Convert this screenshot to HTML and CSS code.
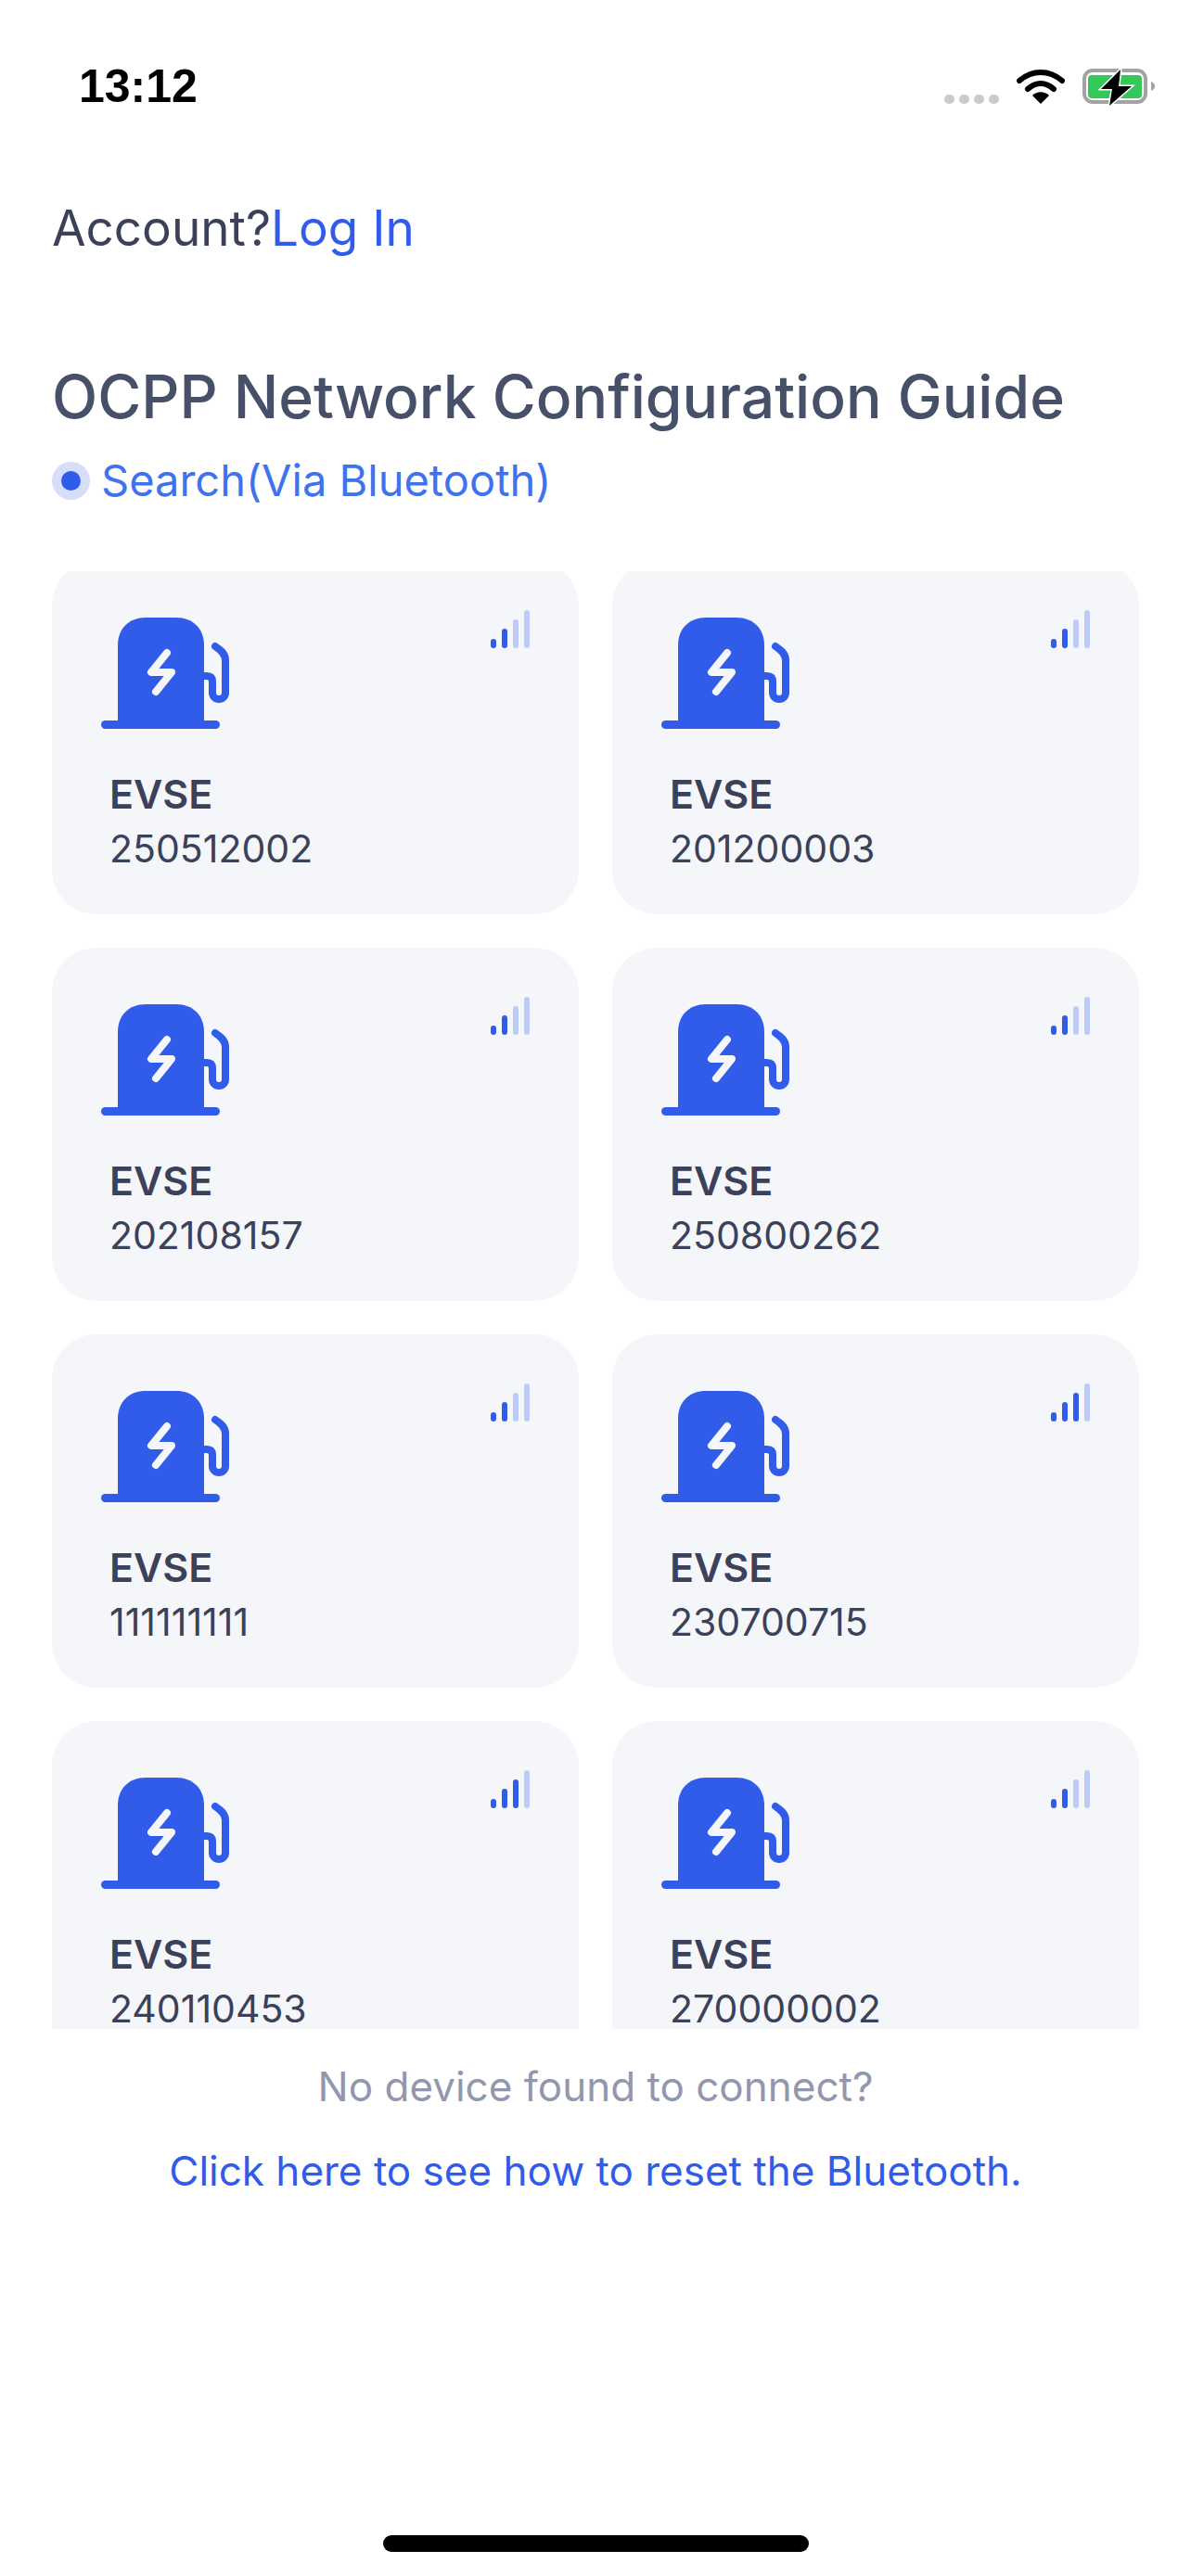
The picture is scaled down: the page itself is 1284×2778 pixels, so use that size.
FILE: index.html
```html
<!DOCTYPE html>
<html>
<head>
    <title>OCPP Network Configuration Guide</title>
    <link rel="stylesheet" href="styles.css">
</head>
<body>
    <svg class="sprites" width="0" height="0">
        <symbol id="charger" viewBox="0 0 140 120">
            <path d="M18 120 V30 C18 12 30 0 48 0 H81 C99 0 111 12 111 30 V120 Z" fill="#315cea"/>
            <rect x="0" y="111" width="128" height="9" rx="4.5" fill="#315cea"/>
            <path d="M71 38 L54 59 H76 L59 80" fill="none" stroke="#f4f6fa" stroke-width="8" stroke-linecap="round" stroke-linejoin="round"/>
            <path d="M111 63 H114 C118 63 120 65 120 69 V81 C120 85 123 88 127 88 C131 88 134 85 134 81 V46 C134 39 129 35 123 31" fill="none" stroke="#315cea" stroke-width="8" stroke-linecap="round"/>
        </symbol>
    </svg>

    <div class="status-bar">
        <span class="time">13:12</span>
        <div class="status-icons">
            <div class="cell-dots"><i></i><i></i><i></i><i></i></div>
            <svg class="wifi" width="52" height="37" viewBox="0 0 52 37">
                <path d="M3 12 C17 0 35 0 49 12" fill="none" stroke="#000" stroke-width="6" stroke-linecap="round"/>
                <path d="M12 21 C21 13 31 13 40 21" fill="none" stroke="#000" stroke-width="6" stroke-linecap="round"/>
                <path d="M17 28 C22 23 30 23 35 28 L26 37 Z" fill="#000"/>
            </svg>
            <svg class="battery" width="78" height="41" viewBox="0 0 78 41">
                <rect x="2" y="2" width="66" height="34" rx="9" fill="none" stroke="#a3a3a3" stroke-width="4"/>
                <rect x="6" y="7" width="58" height="25" rx="4" fill="#34c759"/>
                <path d="M74 14 C77 15 78 17 78 19 C78 21 77 23 74 24 Z" fill="#a3a3a3"/>
                <path d="M41 1 L20 22 H32 L29 40 L53 19 H39 Z" fill="#000" stroke="#fff" stroke-width="3" paint-order="stroke"/>
            </svg>
        </div>
    </div>

    <div class="page">
        <p class="account">Account?<a class="link">Log In</a></p>
        <h1>OCPP Network Configuration Guide</h1>
        <div class="search-state">
            <span class="radio"><i></i></span>
            <span>Search(Via Bluetooth)</span>
        </div>

        <div class="device-scroll">
            <div class="device-grid">
                <div class="device-card">
                    <div class="card-top">
                        <svg class="charger"><use href="#charger"/></svg>
                        <div class="signal lvl-2"><i></i><i></i><i></i><i></i></div>
                    </div>
                    <div class="device-name">EVSE</div>
                    <div class="device-id">250512002</div>
                </div>
                <div class="device-card">
                    <div class="card-top">
                        <svg class="charger"><use href="#charger"/></svg>
                        <div class="signal lvl-2"><i></i><i></i><i></i><i></i></div>
                    </div>
                    <div class="device-name">EVSE</div>
                    <div class="device-id">201200003</div>
                </div>
                <div class="device-card">
                    <div class="card-top">
                        <svg class="charger"><use href="#charger"/></svg>
                        <div class="signal lvl-2"><i></i><i></i><i></i><i></i></div>
                    </div>
                    <div class="device-name">EVSE</div>
                    <div class="device-id">202108157</div>
                </div>
                <div class="device-card">
                    <div class="card-top">
                        <svg class="charger"><use href="#charger"/></svg>
                        <div class="signal lvl-2"><i></i><i></i><i></i><i></i></div>
                    </div>
                    <div class="device-name">EVSE</div>
                    <div class="device-id">250800262</div>
                </div>
                <div class="device-card">
                    <div class="card-top">
                        <svg class="charger"><use href="#charger"/></svg>
                        <div class="signal lvl-2"><i></i><i></i><i></i><i></i></div>
                    </div>
                    <div class="device-name">EVSE</div>
                    <div class="device-id">111111111</div>
                </div>
                <div class="device-card">
                    <div class="card-top">
                        <svg class="charger"><use href="#charger"/></svg>
                        <div class="signal lvl-3"><i></i><i></i><i></i><i></i></div>
                    </div>
                    <div class="device-name">EVSE</div>
                    <div class="device-id">230700715</div>
                </div>
                <div class="device-card">
                    <div class="card-top">
                        <svg class="charger"><use href="#charger"/></svg>
                        <div class="signal lvl-3"><i></i><i></i><i></i><i></i></div>
                    </div>
                    <div class="device-name">EVSE</div>
                    <div class="device-id">240110453</div>
                </div>
                <div class="device-card">
                    <div class="card-top">
                        <svg class="charger"><use href="#charger"/></svg>
                        <div class="signal lvl-2"><i></i><i></i><i></i><i></i></div>
                    </div>
                    <div class="device-name">EVSE</div>
                    <div class="device-id">270000002</div>
                </div>
            </div>
        </div>

        <div class="help">
            <p class="help-note">No device found to connect?</p>
            <a class="help-link">Click here to see how to reset the Bluetooth.</a>
        </div>
    </div>

    <div class="home-bar"></div>
</body>
</html>
```

FILE: styles.css
```css
* {
    margin: 0;
    padding: 0;
    box-sizing: border-box;
}

html, body {
    width: 1284px;
    height: 2778px;
    overflow: hidden;
}

body {
    font-family: Inter, "Noto Sans", sans-serif;
    background: #fff;
    color: #3a4159;
    display: flex;
    flex-direction: column;
}

.sprites {
    position: absolute;
}

/* Status bar */
.status-bar {
    height: 137px;
    padding: 68px 39px 0 85px;
    display: flex;
    justify-content: space-between;
    align-items: flex-start;
}

.time {
    font-family: "Liberation Sans", sans-serif;
    font-size: 50px;
    font-weight: 700;
    line-height: 50px;
    color: #000;
}

.status-icons {
    display: flex;
    align-items: flex-start;
    gap: 19px;
    padding-top: 6px;
}

.cell-dots {
    display: flex;
    gap: 5px;
    margin-top: 28px;
}

.cell-dots i {
    width: 11px;
    height: 10px;
    border-radius: 5px;
    background: #cbcbcb;
}

.wifi {
    margin-top: 1px;
}

/* Main page */
.page {
    flex: 1;
    padding: 0 56px;
    display: flex;
    flex-direction: column;
    min-height: 0;
}

.account {
    font-size: 53px;
    line-height: 60px;
    margin-top: 79px;
}

.link {
    color: #315cea;
}

h1 {
    font-size: 64.2px;
    line-height: 80px;
    font-weight: 500;
    color: #475069;
    margin-top: 112px;
}

.search-state {
    display: flex;
    align-items: center;
    gap: 12px;
    margin-top: 22px;
    font-size: 47px;
    line-height: 56px;
    color: #3f72ee;
}

.radio {
    width: 41px;
    height: 41px;
    border-radius: 50%;
    background: #d6def9;
    display: flex;
    align-items: center;
    justify-content: center;
}

.radio i {
    width: 21px;
    height: 21px;
    border-radius: 50%;
    background: #315cea;
}

/* Device list, scrolled a little */
.device-scroll {
    margin-top: 70px;
    height: 1572px;
    overflow: hidden;
    flex: none;
}

.device-grid {
    margin-top: -11px;
    display: grid;
    grid-template-columns: 568px 568px;
    gap: 36px;
}

.device-card {
    height: 381px;
    background: #f4f6fa;
    border-radius: 48px;
    padding: 61px 53px 0 62px;
}

.card-top {
    display: flex;
    justify-content: space-between;
    align-items: flex-start;
    height: 120px;
}

.charger {
    width: 140px;
    height: 120px;
    margin-left: -9px;
}

.signal {
    display: flex;
    align-items: flex-end;
    gap: 6px;
    height: 41px;
    margin-top: -8px;
}

.signal i {
    width: 6px;
    border-radius: 3px;
    background: #bccbf7;
}

.signal i:nth-child(1) { height: 10px; }
.signal i:nth-child(2) { height: 21px; }
.signal i:nth-child(3) { height: 31px; }
.signal i:nth-child(4) { height: 41px; }

.lvl-2 i:nth-child(-n+2),
.lvl-3 i:nth-child(-n+3) {
    background: #315cea;
}

.device-name {
    font-size: 43px;
    font-weight: 600;
    line-height: 48px;
    margin-top: 46px;
}

.device-id {
    font-size: 41px;
    line-height: 44px;
    margin-top: 13px;
}

/* Help text under the list */
.help {
    text-align: center;
    font-size: 44px;
    line-height: 52px;
    margin-top: 36px;
}

.help-note {
    color: #9297ad;
}

.help-link {
    display: block;
    margin-top: 39px;
    color: #315cea;
}

.home-bar {
    position: absolute;
    left: 413px;
    top: 2734px;
    width: 459px;
    height: 18px;
    border-radius: 9px;
    background: #000;
}
```
